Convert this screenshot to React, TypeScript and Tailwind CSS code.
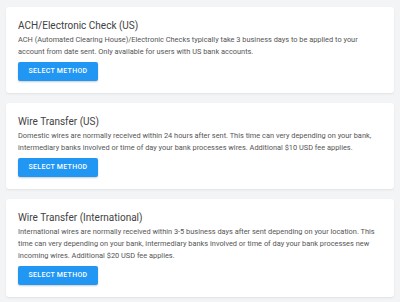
import React from "react";

const methods = [
  {
    title: "ACH/Electronic Check (US)",
    body: "ACH (Automated Clearing House)/Electronic Checks typically take 3 business days to be applied to your account from date sent. Only available for users with US bank accounts.",
  },
  {
    title: "Wire Transfer (US)",
    body: "Domestic wires are normally received within 24 hours after sent. This time can very depending on your bank, intermediary banks involved or time of day your bank processes wires. Additional $10 USD fee applies.",
  },
  {
    title: "Wire Transfer (International)",
    body: "International wires are normally received within 3-5 business days after sent depending on your location. This time can very depending on your bank, intermediary banks involved or time of day your bank processes new incoming wires. Additional $20 USD fee applies.",
  },
];

export default function App() {
  return (
    <div
      className="w-[400px] h-[302px] bg-[#f3f4f6] px-[6px] pt-[7px] flex flex-col gap-[10px]"
      style={{ fontFamily: "Roboto, 'Liberation Sans', sans-serif" }}
    >
      {methods.map((m) => (
        <div
          key={m.title}
          className="bg-white rounded-[3px] shadow-[0_1px_2px_rgba(0,0,0,0.08)] pl-3 pr-[8px] pt-3 pb-3"
        >
          <div className="text-[10px] leading-[14px] text-[#424242] mb-px">{m.title}</div>
          <div className="text-[7.4px] leading-[12px] text-[#555555]">{m.body}</div>
          <button className="mt-[4px] w-[80px] h-[19px] rounded-[2px] bg-[#2196f3] text-white text-[7px] font-medium tracking-[0.3px] uppercase shadow-[0_1px_2px_rgba(0,0,0,0.2)] flex items-center justify-center">
            Select Method
          </button>
        </div>
      ))}
    </div>
  );
}
